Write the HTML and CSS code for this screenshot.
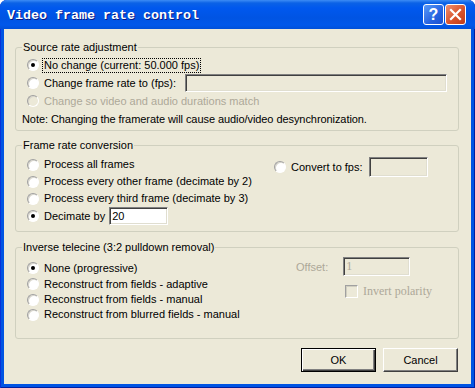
FILE: index.html
```html
<!DOCTYPE html>
<html>
<head>
	<title>Video frame rate control</title>
	<meta charset="utf-8" />
    <link rel="stylesheet" href="styles.css">
</head>
<body>
    <div class="window">
        <div class="titlebar">
            <span class="title">Video frame rate control</span>
            <div class="caption-btns">
                <button class="cap help">?</button>
                <button class="cap close">
                    <svg width="13" height="13" viewBox="0 0 13 13"><path d="M2 2 L11 11 M11 2 L2 11" stroke="#fff" stroke-width="2.2" stroke-linecap="square"/></svg>
                </button>
            </div>
        </div>

        <div class="client">
            <fieldset class="group g1">
                <legend>Source rate adjustment</legend>
                <div class="row"><input type="radio" name="src" checked /><label class="focus">No change (current: 50.000 fps)</label></div>
                <div class="row">
                    <input type="radio" name="src" /><label>Change frame rate to (fps):</label>
                    <input type="text" class="edit fps-edit" disabled />
                </div>
                <div class="row"><input type="radio" name="src" disabled /><label class="off">Change so video and audio durations match</label></div>
                <div class="note">Note: Changing the framerate will cause audio/video desynchronization.</div>
            </fieldset>

            <fieldset class="group g2">
                <legend>Frame rate conversion</legend>
                <div class="cols">
                    <div class="left conv-left">
                        <div class="row r17"><input type="radio" name="conv" /><label>Process all frames</label></div>
                        <div class="row r17"><input type="radio" name="conv" /><label>Process every other frame (decimate by 2)</label></div>
                        <div class="row r17"><input type="radio" name="conv" /><label>Process every third frame (decimate by 3)</label></div>
                        <div class="row r18"><input type="radio" name="conv" checked /><label>Decimate by</label>
                            <input type="text" class="edit dec-edit" value="20" />
                        </div>
                    </div>
                    <div class="right conv-right">
                        <div class="row r20"><input type="radio" name="conv" /><label>Convert to fps:</label>
                            <input type="text" class="edit cfps-edit" disabled />
                        </div>
                    </div>
                </div>
            </fieldset>

            <fieldset class="group g3">
                <legend>Inverse telecine (3:2 pulldown removal)</legend>
                <div class="cols">
                    <div class="left ivtc-left">
                        <div class="row r16"><input type="radio" name="ivtc" checked /><label>None (progressive)</label></div>
                        <div class="row r16"><input type="radio" name="ivtc" /><label>Reconstruct from fields - adaptive</label></div>
                        <div class="row r15"><input type="radio" name="ivtc" /><label>Reconstruct from fields - manual</label></div>
                        <div class="row r15"><input type="radio" name="ivtc" /><label>Reconstruct from blurred fields - manual</label></div>
                    </div>
                    <div class="right ivtc-right">
                        <div class="offset-row">
                            <span class="off">Offset:</span>
                            <input type="text" class="edit off-edit" value="1" disabled />
                        </div>
                        <div class="pol-row">
                            <input type="checkbox" disabled /><span class="off serif">Invert polarity</span>
                        </div>
                    </div>
                </div>
            </fieldset>

            <div class="buttons">
                <button class="btn default">OK</button>
                <button class="btn">Cancel</button>
            </div>
        </div>
    </div>
</body>
</html>
```

FILE: styles.css
```css
body {
    margin: 0;
    background: #fff;
}
.window {
    width: 475px;
    height: 388px;
    box-sizing: border-box;
    display: flex;
    flex-direction: column;
    background: #0054e3;
    border-radius: 7px 7px 0 0;
    box-shadow: inset 1px 0 #0831d9, inset -1px 0 #001ea0, inset 0 -1px #001ea0;
}
.titlebar {
    height: 29px;
    flex: none;
    display: flex;
    align-items: flex-start;
    justify-content: space-between;
    padding: 0 9px 0 7px;
    border-radius: 7px 7px 0 0;
    background: linear-gradient(to bottom, #3d8cf5 0, #0b62e6 3px, #0058ee 8px, #0054e3 18px, #0058ea 25px, #0050d8 29px);
}
.title {
    margin-top: 8px;
    color: #fff;
    font-family: "Liberation Mono", monospace;
    font-weight: bold;
    font-size: 13.33px;
    line-height: 15px;
    text-shadow: 1px 1px #0a1883;
}
.caption-btns {
    display: flex;
    gap: 1px;
    margin-top: 4px;
}
.cap {
    width: 21px;
    height: 21px;
    padding: 0;
    border: 1px solid #fff;
    border-radius: 3px;
    display: flex;
    align-items: center;
    justify-content: center;
    color: #fff;
    font-family: "Liberation Sans", sans-serif;
    font-weight: bold;
    font-size: 16px;
}
.help {
    background: linear-gradient(135deg, #5a9af8, #2663e0 60%, #1b50d0);
}
.close {
    background: linear-gradient(135deg, #f09070, #d8532c 55%, #c03c18);
}
.client {
    flex: 1;
    margin: 0 4px 4px;
    background: #ece9d8;
    padding: 12px 12px 0 11px;
    font-family: "Liberation Sans", sans-serif;
    font-size: 11px;
    color: #000;
}
.group {
    margin: 0;
    border: 1px solid #d0d0bf;
    border-radius: 3px;
    padding: 2px 6px 1px 6px;
    min-width: 0;
}
.group legend {
    padding: 0 1px;
    line-height: 13px;
    height: 13px;
}
.g2 {
    margin-top: 8px;
    padding: 4px 6px 6px 6px;
}
.g3 {
    margin-top: 9px;
    padding: 3px 6px 16px 6px;
}
.row {
    height: 18px;
    display: flex;
    align-items: center;
    padding-left: 5px;
    white-space: nowrap;
}
.r15 { height: 15px; }
.r16 { height: 16px; }
.r17 { height: 17px; }
.r18 { height: 18px; }
.r20 { height: 20px; }
.row label {
    padding: 0 1px;
    line-height: 13px;
}
.focus {
    outline: 1px dotted #000;
    outline-offset: 0;
}
.off {
    color: #aca899;
}
.serif {
    font-family: "Liberation Serif", serif;
    font-size: 12px;
}
.note {
    height: 19px;
    line-height: 19px;
    white-space: nowrap;
    letter-spacing: -0.07px;
}
input[type=radio] {
    appearance: none;
    -webkit-appearance: none;
    margin: 0 4px 0 0;
    width: 12px;
    height: 12px;
    box-sizing: border-box;
    border-radius: 50%;
    border: 1px solid;
    border-color: #a0a0a0 #fff #fff #a0a0a0;
    box-shadow: inset 1px 1px #d8d6cc;
    background: #fff;
    position: relative;
    flex: none;
}
input[type=radio]:checked::after {
    content: "";
    position: absolute;
    left: 3px;
    top: 3px;
    width: 4px;
    height: 4px;
    border-radius: 50%;
    background: #000;
}
input[type=radio]:disabled {
    background: #ece9d8;
}
input[type=checkbox] {
    appearance: none;
    -webkit-appearance: none;
    margin: 0 5px 0 0;
    width: 13px;
    height: 13px;
    box-sizing: border-box;
    border: 1px solid;
    border-color: #a0a0a0 #fff #fff #a0a0a0;
    box-shadow: inset 1px 1px #d0cec0;
    background: #ece9d8;
}
.edit {
    box-sizing: border-box;
    margin: 0;
    padding: 0 2px;
    border: 1px solid;
    border-color: #808080 #fff #fff #808080;
    box-shadow: inset 1px 1px #404040, inset -1px -1px #e0ded0;
    background: #fff;
    font-family: "Liberation Sans", sans-serif;
    font-size: 11px;
    color: #000;
    outline: none;
}
.edit:disabled {
    background: #ece9d8;
    color: #aca899;
}
.fps-edit {
    margin-left: 8px;
    width: 262px;
    height: 18px;
}
.dec-edit {
    margin-left: 3px;
    width: 59px;
    height: 18px;
}
.cols {
    display: flex;
}
.conv-left {
    width: 247px;
}
.conv-right {
    margin-top: 1px;
}
.cfps-edit {
    margin-left: 5px;
    width: 59px;
    height: 20px;
}
.ivtc-left {
    width: 274px;
    padding-top: 3px;
}
.offset-row {
    display: flex;
    align-items: center;
    height: 19px;
}
.off-edit {
    margin-left: 15px;
    width: 67px;
    height: 19px;
    font-family: "Liberation Serif", serif;
    font-size: 12px;
}
.pol-row {
    display: flex;
    align-items: center;
    margin-top: 9px;
    padding-left: 49px;
    height: 13px;
}
.buttons {
    display: flex;
    justify-content: flex-end;
    gap: 7px;
    margin-top: 9px;
    padding-right: 1px;
}
.btn {
    width: 75px;
    height: 24px;
    margin: 0;
    padding: 0;
    background: #ece9d8;
    font-family: "Liberation Sans", sans-serif;
    font-size: 11px;
    color: #000;
    border: 1px solid;
    border-color: #fff #404040 #404040 #fff;
    box-shadow: inset -1px -1px #808080;
}
.btn.default {
    border: 1px solid #000;
    box-shadow: inset 1px 1px #fff, inset -1px -1px #404040, inset -2px -2px #808080;
}
```
